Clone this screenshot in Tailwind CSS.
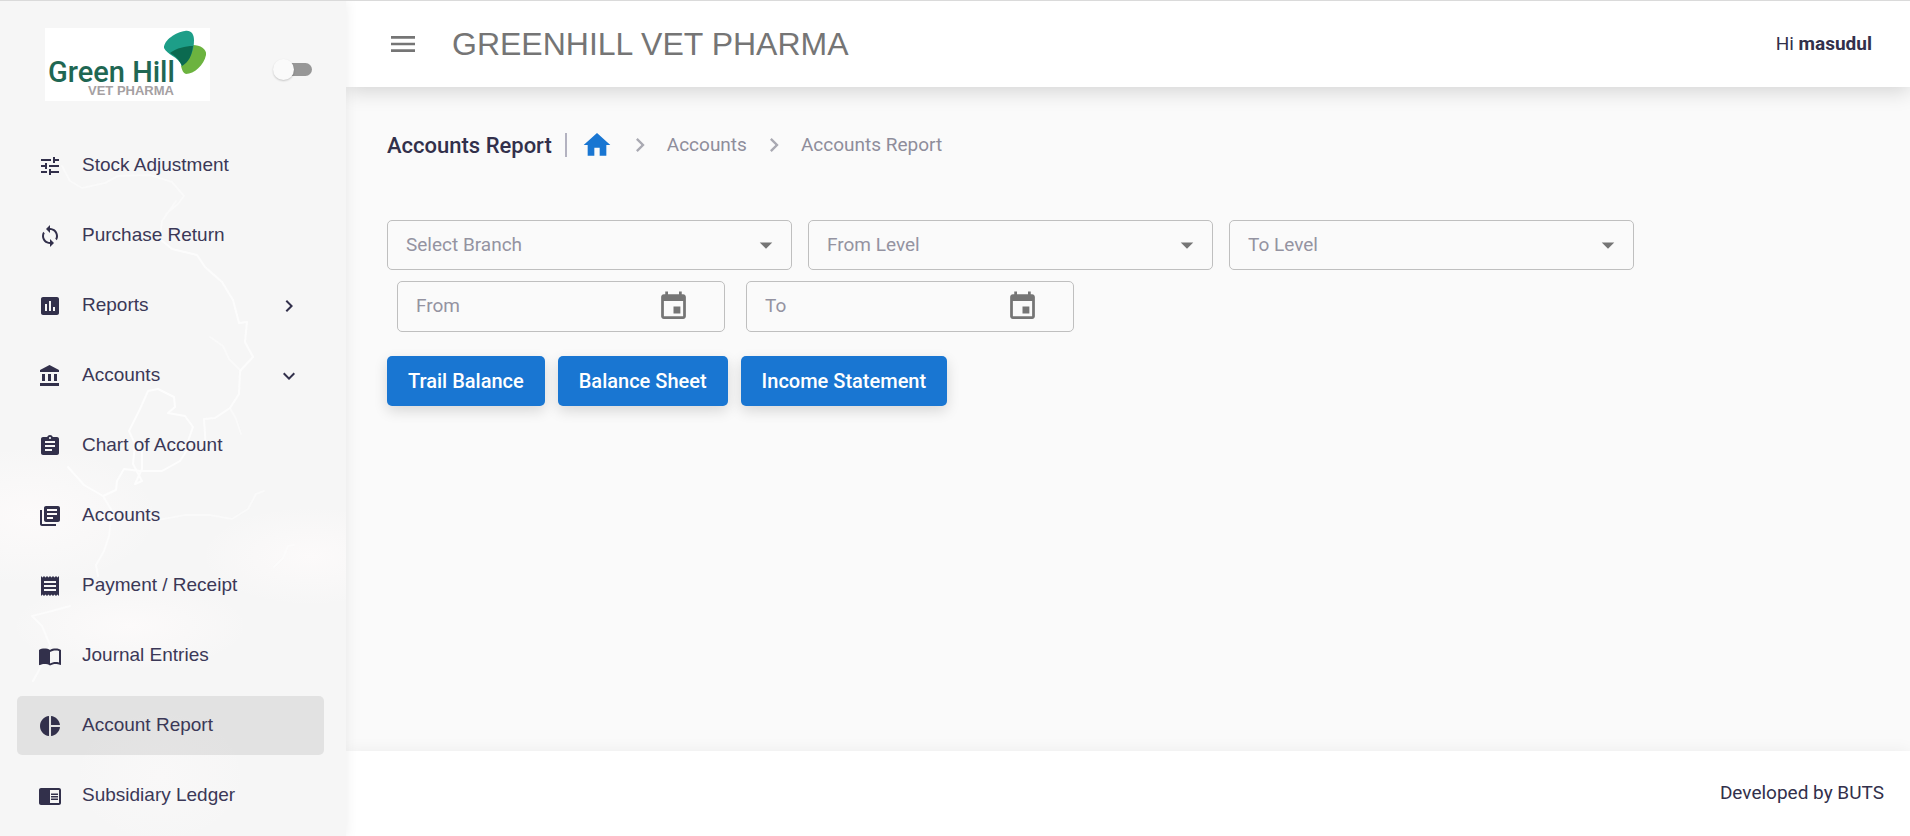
<!DOCTYPE html>
<html lang="en">
<head>
<meta charset="utf-8">
<meta name="viewport" content="width=device-width, initial-scale=1">
<title>Accounts Report</title>
<script src="https://cdn.jsdelivr.net/npm/@tailwindcss/browser@4"></script>
</head>
<body class="flex min-h-screen border-t border-[#dadada] bg-[#fafafa] font-['Roboto',sans-serif] text-[#32304b]">

<aside class="relative z-20 w-[346px] shrink-0 overflow-hidden bg-[#f6f6f6] shadow-[0_0_12px_rgba(0,0,0,0.08)]">
  <svg class="absolute inset-0 h-full w-full" viewBox="0 0 346 835" preserveAspectRatio="none" fill="none" aria-hidden="true">
    <defs>
      <radialGradient id="glow"><stop offset="0" stop-color="#fcfafa"/><stop offset="1" stop-color="#fcfafa" stop-opacity="0"/></radialGradient>
    </defs>
    <ellipse cx="310" cy="555" rx="110" ry="50" fill="url(#glow)"/>
    <ellipse cx="30" cy="515" rx="130" ry="70" fill="url(#glow)"/>
    <ellipse cx="130" cy="625" rx="120" ry="45" fill="url(#glow)"/>
    <ellipse cx="160" cy="775" rx="90" ry="70" fill="url(#glow)" opacity="0.5"/>
    <g stroke="#fdfdfd" stroke-width="2" stroke-linejoin="round" stroke-linecap="round">
      <path opacity="0.5" d="M62 165L70 180L82 187L105 182L118 175L150 174L172 181L184 195L178 203L166 213M176 200L162 220L160 238"/>
      <path opacity="0.9" d="M160 238L172 248L197 254L205 266L222 281L233 299L239 322L247 321L245 341L253 356L240 370L239 393L230 407L215 417L204 418L206 448"/>
      <path d="M193 440L180 460L162 470L140 470L124 468L117 480L116 489L103 495L84 484L68 466"/>
      <path d="M158 388L148 390L140 408L129 430L135 443L133 463L142 480L135 483L142 468L142 450L135 443"/>
      <path d="M158 388L174 396L175 406L168 412L185 415L193 426L188 440"/>
      <path opacity="0.5" d="M230 407L236 418L241 433M210 336L223 345L229 358L241 370"/>
      <path opacity="0.8" d="M103 495L112 510L109 535L104 550L96 564L98 575M70 605L52 610L32 615L42 625L50 644L44 660L33 680"/>
      <path opacity="0.5" d="M158 519L185 514L210 514L232 518L248 508L256 493L264 490M274 566L283 557L288 545L294 544"/>
    </g>
  </svg>

  <div class="relative flex h-[135px] items-start justify-between pt-[27px] pr-[34px] pl-[45px]">
    <a href="#" aria-label="Green Hill Vet Pharma">
      <svg width="165" height="73" viewBox="0 0 165 73">
        <rect width="165" height="73" fill="#fff"/>
        <path d="M148 17C155 17 162 21 161 27C159 37 149 46 141 46C138 45 137 42 136 38C141 32 146 25 148 17Z" fill="#6cb33f"/>
        <path d="M119 20C119 12 131 4 140 3C146 2 149 6 149 12C149 22 146 31 137 38C133 28 122 27 119 20Z" fill="#1d9e88"/>
        <path d="M125 25C132 20 140 18 148 18C147 27 144 34 137 38C134 31 130 28 125 25Z" fill="#0b6a50"/>
        <text x="3" y="54" font-family="Roboto" font-weight="500" font-size="29" fill="#1f6753">Green Hill</text>
        <text x="43" y="67" font-family="Liberation Sans" font-weight="700" font-size="13" fill="#a5a0a2">VET PHARMA</text>
      </svg>
    </a>
    <label class="relative mt-[31px] flex h-[21px] w-[39px] items-center justify-end">
      <input type="checkbox" role="switch" aria-label="Collapse menu" class="peer absolute inset-0 cursor-pointer opacity-0">
      <span class="h-[13px] w-[32px] rounded-full bg-[#979797]"></span>
      <span class="absolute left-0 h-[21px] w-[21px] rounded-full bg-[#fafafa] shadow-[0_1px_2px_rgba(0,0,0,0.2)]"></span>
    </label>
  </div>

  <nav class="relative flex flex-col gap-[11px] pr-[22px] pl-[17px] font-['Liberation_Sans',sans-serif] text-[19px] text-[#3b3857]">
    <a href="#" class="flex h-[59px] items-center gap-[20px] rounded-[5px] pr-[23px] pl-[21px]"><svg class="h-6 w-6 shrink-0" viewBox="0 0 24 24" fill="#32304b"><path d="M3 17v2h6v-2H3zM3 5v2h10V5H3zm10 16v-2h8v-2h-8v-2h-2v6h2zM7 9v2H3v2h4v2h2V9H7zm14 4v-2H11v2h10zm-6-4h2V7h4V5h-4V3h-2v6z"/></svg>Stock Adjustment</a>
    <a href="#" class="flex h-[59px] items-center gap-[20px] rounded-[5px] pr-[23px] pl-[21px]"><svg class="h-6 w-6 shrink-0" viewBox="0 0 24 24" fill="#32304b"><path d="M12 4V1L8 5l4 4V6c3.310 0 6 2.690 6 6 0 1.010-.25 1.970-.7 2.800l1.460 1.460C19.540 15.030 20 13.570 20 12c0-4.420-3.580-8-8-8zm0 14c-3.310 0-6-2.690-6-6 0-1.010.25-1.970.7-2.800L5.240 7.740C4.460 8.970 4 10.430 4 12c0 4.420 3.580 8 8 8v3l4-4-4-4v3z"/></svg>Purchase Return</a>
    <a href="#" class="flex h-[59px] items-center gap-[20px] rounded-[5px] pr-[23px] pl-[21px]"><svg class="h-6 w-6 shrink-0" viewBox="0 0 24 24" fill="#32304b"><path d="M19 3H5c-1.100 0-2 .9-2 2v14c0 1.100.9 2 2 2h14c1.100 0 2-.9 2-2V5c0-1.100-.9-2-2-2zM9 17H7v-7h2v7zm4 0h-2V7h2v10zm4 0h-2v-4h2v4z"/></svg><span class="grow">Reports</span><svg class="h-6 w-6 shrink-0" viewBox="0 0 24 24" fill="#32304b"><path d="M8.590 16.590L13.170 12 8.590 7.410 10 6l6 6-6 6-1.410-1.410z"/></svg></a>
    <a href="#" class="flex h-[59px] items-center gap-[20px] rounded-[5px] pr-[23px] pl-[21px]"><svg class="h-6 w-6 shrink-0" viewBox="0 0 24 24" fill="#32304b"><path d="M4 10v7h3v-7H4zm6 0v7h3v-7h-3zM2 22h19v-3H2v3zm14-12v7h3v-7h-3zm-4.500-9L2 6v2h19V6l-9.500-5z"/></svg><span class="grow">Accounts</span><svg class="h-6 w-6 shrink-0" viewBox="0 0 24 24" fill="#32304b"><path d="M16.590 8.590L12 13.170 7.410 8.590 6 10l6 6 6-6z"/></svg></a>
    <a href="#" class="flex h-[59px] items-center gap-[20px] rounded-[5px] pr-[23px] pl-[21px]"><svg class="h-6 w-6 shrink-0" viewBox="0 0 24 24" fill="#32304b"><path d="M19 3h-4.180C14.400 1.840 13.300 1 12 1c-1.300 0-2.400.84-2.820 2H5c-1.100 0-2 .9-2 2v14c0 1.100.9 2 2 2h14c1.100 0 2-.9 2-2V5c0-1.100-.9-2-2-2zm-7 0c.55 0 1 .45 1 1s-.45 1-1 1-1-.45-1-1 .45-1 1-1zm2 14H7v-2h7v2zm3-4H7v-2h10v2zm0-4H7V7h10v2z"/></svg>Chart of Account</a>
    <a href="#" class="flex h-[59px] items-center gap-[20px] rounded-[5px] pr-[23px] pl-[21px]"><svg class="h-6 w-6 shrink-0" viewBox="0 0 24 24" fill="#32304b"><path d="M4 6H2v14c0 1.100.9 2 2 2h14v-2H4V6zm16-4H8c-1.100 0-2 .9-2 2v12c0 1.100.9 2 2 2h12c1.100 0 2-.9 2-2V4c0-1.100-.9-2-2-2zm-1 9H9V9h10v2zm-4 4H9v-2h6v2zm4-8H9V5h10v2z"/></svg>Accounts</a>
    <a href="#" class="flex h-[59px] items-center gap-[20px] rounded-[5px] pr-[23px] pl-[21px]"><svg class="h-6 w-6 shrink-0" viewBox="0 0 24 24" fill="#32304b"><path d="M18 17H6v-2h12v2zm0-4H6v-2h12v2zm0-4H6V7h12v2zM3 22l1.500-1.500L6 22l1.500-1.500L9 22l1.500-1.500L12 22l1.500-1.500L15 22l1.500-1.500L18 22l1.500-1.500L21 22V2l-1.500 1.500L18 2l-1.500 1.500L15 2l-1.500 1.500L12 2l-1.500 1.500L9 2 7.500 3.500 6 2 4.500 3.500 3 2v20z"/></svg>Payment / Receipt</a>
    <a href="#" class="flex h-[59px] items-center gap-[20px] rounded-[5px] pr-[23px] pl-[21px]"><svg class="h-6 w-6 shrink-0" viewBox="0 0 24 24" fill="#32304b"><path d="M21 5c-1.110-.35-2.330-.5-3.500-.5-1.950 0-4.050.4-5.500 1.500-1.450-1.100-3.550-1.500-5.500-1.500S2.450 4.900 1 6v14.650c0 .25.25.5.5.5.1 0 .15-.05.25-.05C3.100 20.450 5.050 20 6.500 20c1.950 0 4.050.4 5.500 1.500 1.350-.85 3.800-1.500 5.500-1.500 1.650 0 3.350.3 4.750 1.050.1.050.15.050.25.050.25 0 .5-.25.5-.5V6c-.6-.45-1.250-.75-2-1zm0 13.500c-1.100-.35-2.300-.5-3.500-.5-1.700 0-4.150.65-5.500 1.500V8c1.350-.85 3.800-1.500 5.500-1.500 1.200 0 2.400.15 3.500.5v11.500z"/></svg>Journal Entries</a>
    <a href="#" aria-current="page" class="flex h-[59px] items-center gap-[20px] rounded-[5px] bg-black/8 pr-[23px] pl-[21px]"><svg class="h-6 w-6 shrink-0" viewBox="0 0 24 24" fill="#32304b"><path d="M11 2v20c-5.070-.5-9-4.790-9-10s3.930-9.500 9-10zm2.030 0v8.990H22c-.47-4.740-4.240-8.520-8.970-8.990zm0 11.010V22c4.740-.47 8.500-4.250 8.970-8.990h-8.970z"/></svg>Account Report</a>
    <a href="#" class="flex h-[59px] items-center gap-[20px] rounded-[5px] pr-[23px] pl-[21px]"><svg class="h-6 w-6 shrink-0" viewBox="0 0 24 24" fill="#32304b"><path d="M13 12h7v1.500h-7zm0-2.500h7V11h-7zm0 5h7V16h-7zM21 4H3c-1.100 0-2 .9-2 2v13c0 1.100.9 2 2 2h18c1.100 0 2-.9 2-2V6c0-1.100-.9-2-2-2zm0 15h-9V6h9v13z"/></svg>Subsidiary Ledger</a>
  </nav>
</aside>

<div class="flex min-w-0 grow flex-col">
  <header class="relative z-10 flex h-[86px] items-center bg-white pr-[38px] pl-[41px] shadow-[0_4px_20px_rgba(0,0,0,0.16)]">
    <button type="button" aria-label="Open menu" class="text-[#757575]"><svg class="h-8 w-8" viewBox="0 0 24 24" fill="currentColor"><path d="M3 18h18v-2H3v2zm0-5h18v-2H3v2zm0-7v2h18V6H3z"/></svg></button>
    <h1 class="ml-[33px] grow font-['Liberation_Sans',sans-serif] text-[32px] leading-10 text-[#757575]">GREENHILL VET PHARMA</h1>
    <p class="text-[19px]">Hi <b class="font-bold">masudul</b></p>
  </header>

  <main class="grow px-[41px] pt-[42px]">
    <nav aria-label="Breadcrumb" class="flex h-8 items-center text-[19px] text-[#8e8d9b]">
      <h2 class="text-[22px] font-medium text-[#32304b]">Accounts Report</h2>
      <span class="ml-[13px] h-6 w-[2px] bg-[#b3b2c0]"></span>
      <a href="#" aria-label="Home" class="ml-[14px] text-[#1976d2]"><svg class="h-8 w-8" viewBox="0 0 24 24" fill="currentColor"><path d="M10 20v-6h4v6h5v-8h3L12 3 2 12h3v8z"/></svg></a>
      <svg class="ml-[13px] h-7 w-7" viewBox="0 0 24 24" fill="#a9a9b2"><path d="M8.590 16.590L13.170 12 8.590 7.410 10 6l6 6-6 6-1.410-1.410z"/></svg>
      <a href="#" class="ml-[13px]">Accounts</a>
      <svg class="ml-[13px] h-7 w-7" viewBox="0 0 24 24" fill="#a9a9b2"><path d="M8.590 16.590L13.170 12 8.590 7.410 10 6l6 6-6 6-1.410-1.410z"/></svg>
      <span class="ml-[13px]">Accounts Report</span>
    </nav>

    <form class="mt-[59px]">
      <div class="flex flex-wrap gap-4">
        <div class="relative w-[405px]">
          <select aria-label="Select Branch" class="h-[50px] w-full appearance-none rounded-[5px] border border-[#bfbfbf] px-[18px] text-[19px] text-[#9493a1]"><option>Select Branch</option></select>
          <svg class="pointer-events-none absolute top-[10px] right-[11px] h-[30px] w-[30px]" viewBox="0 0 24 24" fill="#757575"><path d="M7 10l5 5 5-5z"/></svg>
        </div>
        <div class="relative w-[405px]">
          <select aria-label="From Level" class="h-[50px] w-full appearance-none rounded-[5px] border border-[#bfbfbf] px-[18px] text-[19px] text-[#9493a1]"><option>From Level</option></select>
          <svg class="pointer-events-none absolute top-[10px] right-[11px] h-[30px] w-[30px]" viewBox="0 0 24 24" fill="#757575"><path d="M7 10l5 5 5-5z"/></svg>
        </div>
        <div class="relative w-[405px]">
          <select aria-label="To Level" class="h-[50px] w-full appearance-none rounded-[5px] border border-[#bfbfbf] px-[18px] text-[19px] text-[#9493a1]"><option>To Level</option></select>
          <svg class="pointer-events-none absolute top-[10px] right-[11px] h-[30px] w-[30px]" viewBox="0 0 24 24" fill="#757575"><path d="M7 10l5 5 5-5z"/></svg>
        </div>
      </div>

      <div class="mt-[11px] flex flex-wrap gap-[21px] pl-[10px]">
        <div class="flex h-[51px] w-[328px] items-center rounded-[5px] border border-[#bfbfbf] pr-[34px] pl-[18px]">
          <input type="text" aria-label="From" placeholder="From" class="min-w-0 grow text-[19px] placeholder:text-[#9493a1]">
          <button type="button" aria-label="Choose from date"><svg class="h-[33px] w-[33px]" viewBox="0 0 24 24" fill="#757575"><path d="M17 12h-5v5h5v-5zM16 1v2H8V1H6v2H5c-1.110 0-1.990.9-1.990 2L3 19c0 1.100.89 2 2 2h14c1.100 0 2-.9 2-2V5c0-1.100-.9-2-2-2h-1V1h-2zm3 18H5V8h14v11z"/></svg></button>
        </div>
        <div class="flex h-[51px] w-[328px] items-center rounded-[5px] border border-[#bfbfbf] pr-[34px] pl-[18px]">
          <input type="text" aria-label="To" placeholder="To" class="min-w-0 grow text-[19px] placeholder:text-[#9493a1]">
          <button type="button" aria-label="Choose to date"><svg class="h-[33px] w-[33px]" viewBox="0 0 24 24" fill="#757575"><path d="M17 12h-5v5h5v-5zM16 1v2H8V1H6v2H5c-1.110 0-1.990.9-1.990 2L3 19c0 1.100.89 2 2 2h14c1.100 0 2-.9 2-2V5c0-1.100-.9-2-2-2h-1V1h-2zm3 18H5V8h14v11z"/></svg></button>
        </div>
      </div>

      <div class="mt-6 flex flex-wrap gap-[13px] text-[20px] font-medium text-white">
        <button type="button" class="h-[50px] rounded-[5px] bg-[#1976d2] px-[21px] shadow-[0_5px_14px_rgba(0,0,0,0.14)]">Trail Balance</button>
        <button type="button" class="h-[50px] rounded-[5px] bg-[#1976d2] px-[21px] shadow-[0_5px_14px_rgba(0,0,0,0.14)]">Balance Sheet</button>
        <button type="button" class="h-[50px] rounded-[5px] bg-[#1976d2] px-[21px] shadow-[0_5px_14px_rgba(0,0,0,0.14)]">Income Statement</button>
      </div>
    </form>
  </main>

  <footer class="flex h-[85px] items-center justify-end bg-white pr-[26px] text-[19px] shadow-[0_0_16px_rgba(0,0,0,0.06)]">Developed by BUTS</footer>
</div>
</body>
</html>
